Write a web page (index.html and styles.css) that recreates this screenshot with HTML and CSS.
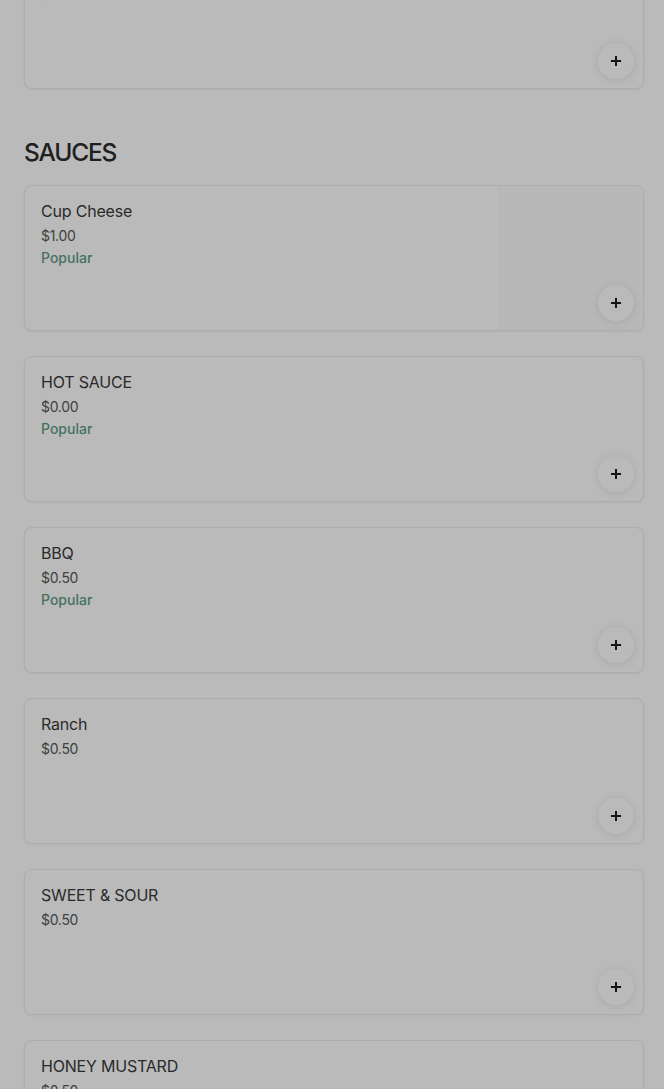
FILE: index.html
```html
<!DOCTYPE html>
<html lang="en">
<head>
    <meta charset="UTF-8">
    <meta name="viewport" content="width=device-width, initial-scale=1.0">
    <title>Menu - Sauces</title>
    <link rel="stylesheet" href="styles.css">
</head>
<body>
    <div class="menu">
        <div class="item-card first-card">
            <div class="item-info">
                <div class="item-name">Side Ranch</div>
                <div class="item-price">$0.50</div>
            </div>
            <button class="add-btn" aria-label="Add">
                <svg width="12" height="12" viewBox="0 0 12 12"><path d="M6 1v10M1 6h10" stroke="currentColor" stroke-width="2"/></svg>
            </button>
        </div>

        <h2 class="section-title">SAUCES</h2>

        <div class="item-list">
            <div class="item-card">
                <div class="item-info">
                    <div class="item-name">Cup Cheese</div>
                    <div class="item-price">$1.00</div>
                    <div class="item-tag">Popular</div>
                </div>
                <div class="item-photo"></div>
                <button class="add-btn" aria-label="Add">
                    <svg width="12" height="12" viewBox="0 0 12 12"><path d="M6 1v10M1 6h10" stroke="currentColor" stroke-width="2"/></svg>
                </button>
            </div>
            <div class="item-card">
                <div class="item-info">
                    <div class="item-name">HOT SAUCE</div>
                    <div class="item-price">$0.00</div>
                    <div class="item-tag">Popular</div>
                </div>
                <button class="add-btn" aria-label="Add">
                    <svg width="12" height="12" viewBox="0 0 12 12"><path d="M6 1v10M1 6h10" stroke="currentColor" stroke-width="2"/></svg>
                </button>
            </div>
            <div class="item-card">
                <div class="item-info">
                    <div class="item-name">BBQ</div>
                    <div class="item-price">$0.50</div>
                    <div class="item-tag">Popular</div>
                </div>
                <button class="add-btn" aria-label="Add">
                    <svg width="12" height="12" viewBox="0 0 12 12"><path d="M6 1v10M1 6h10" stroke="currentColor" stroke-width="2"/></svg>
                </button>
            </div>
            <div class="item-card">
                <div class="item-info">
                    <div class="item-name">Ranch</div>
                    <div class="item-price">$0.50</div>
                </div>
                <button class="add-btn" aria-label="Add">
                    <svg width="12" height="12" viewBox="0 0 12 12"><path d="M6 1v10M1 6h10" stroke="currentColor" stroke-width="2"/></svg>
                </button>
            </div>
            <div class="item-card">
                <div class="item-info">
                    <div class="item-name">SWEET &amp; SOUR</div>
                    <div class="item-price">$0.50</div>
                </div>
                <button class="add-btn" aria-label="Add">
                    <svg width="12" height="12" viewBox="0 0 12 12"><path d="M6 1v10M1 6h10" stroke="currentColor" stroke-width="2"/></svg>
                </button>
            </div>
            <div class="item-card">
                <div class="item-info">
                    <div class="item-name">HONEY MUSTARD</div>
                    <div class="item-price">$0.50</div>
                </div>
                <button class="add-btn" aria-label="Add">
                    <svg width="12" height="12" viewBox="0 0 12 12"><path d="M6 1v10M1 6h10" stroke="currentColor" stroke-width="2"/></svg>
                </button>
            </div>
        </div>
    </div>
    <div class="backdrop"></div>
</body>
</html>
```

FILE: styles.css
```css
body {
    margin: 0;
    font-family: Inter, "Noto Sans", sans-serif;
    background: #ffffff;
    color: #191919;
    overflow: hidden;
}
.menu {
    padding: 0 20px 0 24px;
}
.section-title {
    margin: 47px 0 17px;
    font-size: 24.5px;
    line-height: 32px;
    font-weight: 500;
    letter-spacing: -1.2px;
    color: #2c2c2c;
}
.item-list {
    display: flex;
    flex-direction: column;
    gap: 25px;
}
.item-card {
    position: relative;
    display: flex;
    height: 146px;
    box-sizing: border-box;
    border: 1px solid #ececec;
    border-radius: 8px;
    box-shadow: 0 1px 3px rgba(0, 0, 0, 0.05);
    background: #ffffff;
    overflow: hidden;
}
.first-card {
    margin-top: -57px;
}
.item-info {
    flex: 1;
    padding: 13px 16px;
}
.item-name {
    font-size: 16px;
    line-height: 24px;
    font-weight: 400;
    letter-spacing: -0.2px;
    color: #3a3a3a;
}
.item-price {
    margin-top: 3px;
    font-size: 14px;
    line-height: 20px;
    letter-spacing: -0.3px;
    color: #585858;
}
.item-tag {
    margin-top: 2px;
    font-size: 14px;
    line-height: 20px;
    font-weight: 500;
    color: #5e9d84;
}
.item-photo {
    width: 143px;
    background: #fcfcfc;
    border-left: 1px solid #f8f8f8;
}
.add-btn {
    position: absolute;
    right: 9px;
    bottom: 9px;
    width: 36px;
    height: 36px;
    border: none;
    border-radius: 50%;
    background: #ffffff;
    box-shadow: 0 1px 8px rgba(0, 0, 0, 0.1);
    color: #1e1e1e;
    display: flex;
    align-items: center;
    justify-content: center;
    padding: 0;
    cursor: pointer;
}
.backdrop {
    position: fixed;
    inset: 0;
    background: rgba(0, 0, 0, 0.27);
}
```
